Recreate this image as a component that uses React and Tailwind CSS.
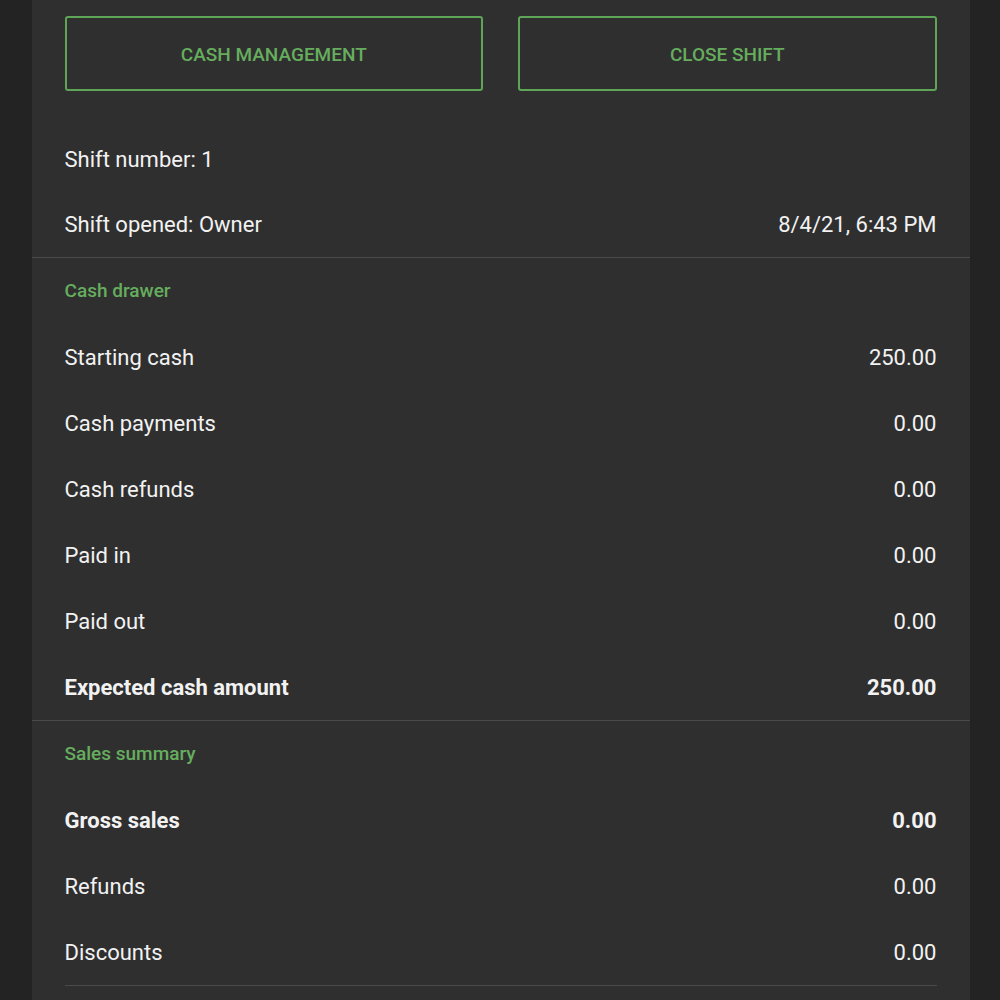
const cashDrawer = [
    { label: "Starting cash", value: "250.00" },
    { label: "Cash payments", value: "0.00" },
    { label: "Cash refunds", value: "0.00" },
    { label: "Paid in", value: "0.00" },
    { label: "Paid out", value: "0.00" },
    { label: "Expected cash amount", value: "250.00", bold: true },
]

const salesSummary = [
    { label: "Gross sales", value: "0.00", bold: true },
    { label: "Refunds", value: "0.00" },
    { label: "Discounts", value: "0.00" },
]

function Row({ label, value, bold }) {
    return (
        <div className={`flex items-center justify-between h-[66px] px-[33px] text-[22px] text-[#f2f2f2] ${bold ? "font-bold" : ""}`}>
            <span>{label}</span>
            {value && <span>{value}</span>}
        </div>
    )
}

function SectionTitle({ children }) {
    return (
        <div className="flex items-center h-[66px] pl-[33px] pt-px text-[19px] font-medium text-[#66ad5e]">
            {children}
        </div>
    )
}

export default function App() {
    return (
        <div className="min-h-screen bg-[#232323] flex justify-center" style={{ fontFamily: "Roboto, 'Noto Sans', sans-serif" }}>
            <div className="w-[938px] ml-px bg-[#2f2f2f] h-[1000px] overflow-hidden">

                {/* Buttons */}
                <div className="grid grid-cols-2 gap-[35px] px-[33px] pt-4 pb-[35px]">
                    <button className="h-[75px] pt-[3px] border-2 border-[#5fa558] rounded-[3px] text-[#66ad5e] text-[19px] font-medium">
                        CASH MANAGEMENT
                    </button>
                    <button className="h-[75px] pt-[3px] border-2 border-[#5fa558] rounded-[3px] text-[#66ad5e] text-[19px] font-medium">
                        CLOSE SHIFT
                    </button>
                </div>

                {/* Shift info */}
                <Row label="Shift number: 1" />
                <div className="flex items-center justify-between h-[65px] px-[33px] text-[22px] text-[#f2f2f2]">
                    <span>Shift opened: Owner</span>
                    <span>8/4/21, 6:43 PM</span>
                </div>
                <div className="h-px bg-[#4a4a4a]" />

                {/* Cash drawer */}
                <SectionTitle>Cash drawer</SectionTitle>
                {cashDrawer.map((r) => (
                    <Row key={r.label} {...r} />
                ))}
                <div className="h-px bg-[#4a4a4a]" />

                {/* Sales summary */}
                <SectionTitle>Sales summary</SectionTitle>
                {salesSummary.map((r) => (
                    <Row key={r.label} {...r} />
                ))}
                <div className="mx-[33px] h-px bg-[#4a4a4a]" />
            </div>
        </div>
    )
}
